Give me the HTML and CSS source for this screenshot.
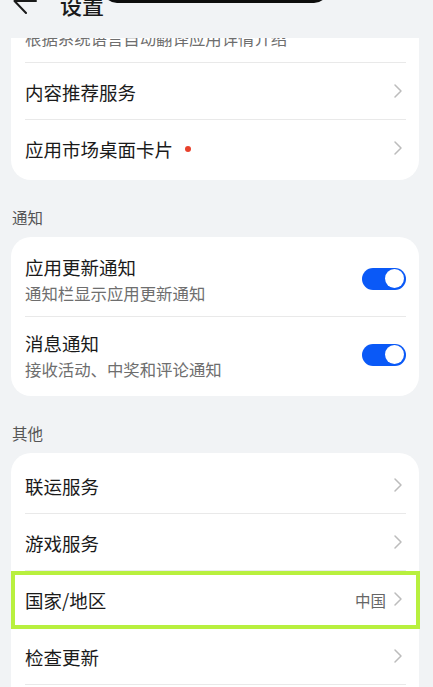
FILE: index.html
```html
<!DOCTYPE html>
<html lang="zh-CN">
<head>
<meta charset="utf-8">
<title>设置</title>
<link rel="stylesheet" href="styles.css">
</head>
<body>
<div class="screen">
  <header class="topbar">
    <div class="island"></div>
    <div class="topbar-inner">
      <svg class="back" width="24" height="26" viewBox="0 0 24 26"><path d="M23 13 H2 M13 1 L1.5 13 L13 25" fill="none" stroke="#1a1a1a" stroke-width="2" stroke-linecap="round" stroke-linejoin="round"/></svg>
      <span class="page-title">设置</span>
    </div>
  </header>

  <section class="card card-cut">
    <div class="row-partial"><span class="sub">根据系统语言自动翻译应用详情介绍</span></div>
    <div class="divider"></div>
    <div class="row">
      <span class="label">内容推荐服务</span>
      <svg class="chev" width="10" height="16" viewBox="0 0 10 16"><path d="M2 2 L8 8 L2 14" fill="none" stroke="#bcbcbc" stroke-width="1.5" stroke-linecap="round" stroke-linejoin="round"/></svg>
    </div>
    <div class="divider"></div>
    <div class="row">
      <span class="label">应用市场桌面卡片</span><span class="dot"></span>
      <svg class="chev" width="10" height="16" viewBox="0 0 10 16"><path d="M2 2 L8 8 L2 14" fill="none" stroke="#bcbcbc" stroke-width="1.5" stroke-linecap="round" stroke-linejoin="round"/></svg>
    </div>
  </section>

  <div class="section-title">通知</div>
  <section class="card">
    <div class="row row-tall">
      <div class="texts">
        <div class="label">应用更新通知</div>
        <div class="sub">通知栏显示应用更新通知</div>
      </div>
      <span class="switch"><span class="knob"></span></span>
    </div>
    <div class="divider"></div>
    <div class="row row-tall">
      <div class="texts">
        <div class="label">消息通知</div>
        <div class="sub">接收活动、中奖和评论通知</div>
      </div>
      <span class="switch"><span class="knob"></span></span>
    </div>
  </section>

  <div class="section-title">其他</div>
  <section class="card">
    <div class="row">
      <span class="label">联运服务</span>
      <svg class="chev" width="10" height="16" viewBox="0 0 10 16"><path d="M2 2 L8 8 L2 14" fill="none" stroke="#bcbcbc" stroke-width="1.5" stroke-linecap="round" stroke-linejoin="round"/></svg>
    </div>
    <div class="divider"></div>
    <div class="row">
      <span class="label">游戏服务</span>
      <svg class="chev" width="10" height="16" viewBox="0 0 10 16"><path d="M2 2 L8 8 L2 14" fill="none" stroke="#bcbcbc" stroke-width="1.5" stroke-linecap="round" stroke-linejoin="round"/></svg>
    </div>
    <div class="divider"></div>
    <div class="row row-marked">
      <span class="label">国家/地区</span>
      <span class="value">中国</span>
      <svg class="chev chev-after-value" width="10" height="16" viewBox="0 0 10 16"><path d="M2 2 L8 8 L2 14" fill="none" stroke="#bcbcbc" stroke-width="1.5" stroke-linecap="round" stroke-linejoin="round"/></svg>
      <span class="mark"></span>
    </div>
    <div class="divider"></div>
    <div class="row">
      <span class="label">检查更新</span>
      <svg class="chev" width="10" height="16" viewBox="0 0 10 16"><path d="M2 2 L8 8 L2 14" fill="none" stroke="#bcbcbc" stroke-width="1.5" stroke-linecap="round" stroke-linejoin="round"/></svg>
    </div>
    <div class="divider"></div>
    <div class="row row-more"></div>
  </section>
</div>
</body>
</html>
```

FILE: styles.css
```css
* { box-sizing: border-box; }

html, body {
  margin: 0;
  padding: 0;
  background: #f1f3f5;
}

body {
  font-family: "Noto Sans CJK SC", "Noto Sans", sans-serif;
  color: #1a1a1a;
}

.screen {
  width: 433px;
  height: 687px;
  overflow: hidden;
  position: relative;
}

/* header */
.topbar {
  position: relative;
  height: 38px;
  overflow: hidden;
  background: #f1f3f5;
}

.island {
  position: absolute;
  left: 103px;
  top: -20px;
  width: 225px;
  height: 23px;
  background: #0d0d0d;
  border-radius: 0 0 14px 14px;
}

.topbar-inner {
  display: flex;
  align-items: center;
  height: 26px;
  margin-top: -12px;
  padding-left: 13px;
}

.back {
  flex: none;
}

.page-title {
  margin-left: 23px;
  font-size: 22px;
  line-height: 26px;
  font-weight: 500;
  margin-top: 6px;
}

/* cards */
.card {
  margin: 0 14px 0 11px;
  background: #ffffff;
  border-radius: 20px;
  padding: 4px 0;
}

.card-cut {
  border-radius: 0 0 20px 20px;
  padding-top: 0;
}

.row-partial {
  height: 24px;
  overflow: hidden;
  padding-left: 14px;
}

.row-partial .sub {
  display: block;
  margin-top: -11px;
}

.divider {
  height: 1px;
  margin: 0 13px 0 14px;
  background: #e9e9e9;
}

.row {
  position: relative;
  display: flex;
  align-items: center;
  height: 56px;
  padding: 0 16px 0 14px;
}

.row-tall {
  height: 75px;
  padding-right: 13px;
}

.label {
  font-size: 18.5px;
  line-height: 24px;
  color: #1a1a1a;
  padding-top: 2px;
}

.sub {
  font-size: 16.4px;
  line-height: 22px;
  color: #6e6e6e;
}

.texts {
  display: flex;
  flex-direction: column;
  gap: 3px;
  padding-top: 2px;
}

.texts .label {
  padding-top: 0;
}

.dot {
  width: 6px;
  height: 6px;
  margin-left: 12px;
  margin-top: 2px;
  border-radius: 50%;
  background: #e8412c;
}

.chev {
  margin-left: auto;
  flex: none;
}

.value {
  margin-left: auto;
  font-size: 15.5px;
  line-height: 20px;
  color: #666666;
  padding-top: 2px;
}

.chev-after-value {
  margin-left: 7px;
}

.switch {
  margin-left: auto;
  flex: none;
  display: flex;
  align-items: center;
  justify-content: flex-end;
  width: 44px;
  height: 22px;
  padding: 0 2px;
  border-radius: 11px;
  background: #0a59f7;
}

.knob {
  width: 19px;
  height: 19px;
  border-radius: 50%;
  background: #ffffff;
}

.section-title {
  margin: 27px 0 10px 12px;
  font-size: 15.5px;
  line-height: 20px;
  color: #555555;
}

.row-marked .mark {
  position: absolute;
  left: 0;
  right: -1px;
  top: 0;
  bottom: -2px;
  border: 4px solid #b8f03e;
  pointer-events: none;
}
```
